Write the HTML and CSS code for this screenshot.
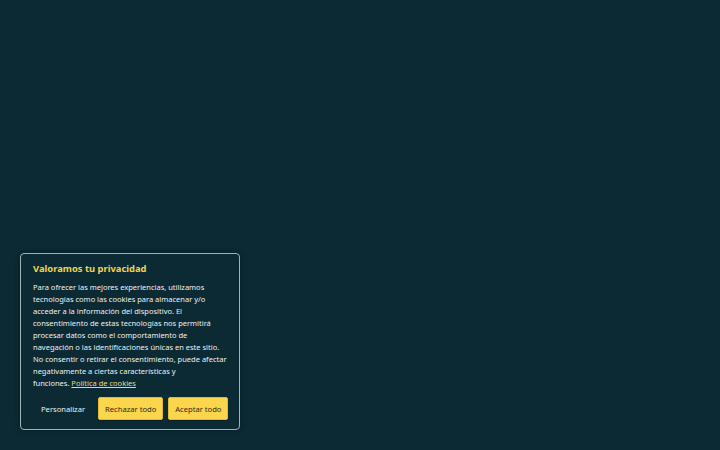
FILE: index.html
```html
<!DOCTYPE html>
<html lang="es">
<head>
<meta charset="utf-8">
<title>Cookies</title>
<link rel="stylesheet" href="styles.css">
</head>
<body>
<div class="page">
  <div class="consent">
    <h2 class="title">Valoramos tu privacidad</h2>
    <p class="text">Para ofrecer las mejores experiencias, utilizamos<br>tecnologías como las cookies para almacenar y/o<br>acceder a la información del dispositivo. El<br>consentimiento de estas tecnologías nos permitirá<br>procesar datos como el comportamiento de<br>navegación o las identificaciones únicas en este sitio.<br>No consentir o retirar el consentimiento, puede afectar<br>negativamente a ciertas características y<br>funciones. <a class="link" href="#">Política de cookies</a></p>
    <div class="actions">
      <button class="btn btn-plain">Personalizar</button>
      <button class="btn btn-yellow">Rechazar todo</button>
      <button class="btn btn-yellow">Aceptar todo</button>
    </div>
  </div>
</div>
</body>
</html>
```

FILE: styles.css
```css
* { box-sizing: border-box; }
html, body { margin: 0; padding: 0; }
body {
  width: 720px;
  height: 450px;
  background: #0b2a33;
  font-family: "Noto Sans", "DejaVu Sans", sans-serif;
  overflow: hidden;
}
.page {
  height: 450px;
  display: flex;
  align-items: flex-end;
  padding: 0 0 20px 20px;
}
.consent {
  width: 220px;
  border: 1px solid #9fb3b8;
  border-radius: 4px;
  background: #0b2a33;
  padding: 9px 12px 9px 12px;
  box-shadow: 0 0 6px rgba(0,0,0,0.35);
}
.title {
  margin: 0 0 6px 0;
  color: #f2d64b;
  font-size: 9.4px;
  font-weight: 700;
  line-height: 12px;
}
.text {
  margin: 0;
  color: #eef2f3;
  font-size: 7.5px;
  line-height: 12px;
  white-space: nowrap;
}
.link {
  color: #e9d98a;
  text-decoration: underline;
}
.actions {
  display: flex;
  gap: 5px;
  margin-top: 8px;
  align-items: center;
}
.btn {
  font-family: inherit;
  font-size: 7.6px;
  height: 23px;
  border-radius: 2px;
  padding: 0 7px;
  white-space: nowrap;
  cursor: pointer;
}
.btn-plain {
  background: transparent;
  border: 1px solid transparent;
  color: #eef2f3;
}
.btn-yellow {
  background: #fbd54c;
  border: 1px solid #e0b93a;
  color: #2b2a1c;
  padding: 0 6px;
  box-shadow: 0 1px 1px rgba(0,0,0,0.25);
}
```
